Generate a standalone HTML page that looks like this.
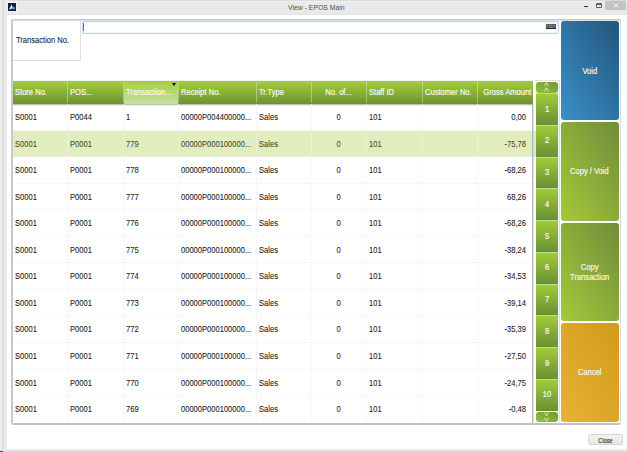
<!DOCTYPE html><html><head><meta charset="utf-8"><style>
*{margin:0;padding:0;box-sizing:border-box}
html,body{width:627px;height:452px;overflow:hidden;background:#fff;font-family:"Liberation Sans",sans-serif}
.a{position:absolute}
svg{display:block}
.t,.h{position:absolute;white-space:nowrap;line-height:10px;height:10px}
.t{color:#1a1a1a;-webkit-text-stroke:0.08px #1a1a1a}
.h{color:#f6faee;-webkit-text-stroke:0.2px #f6faee}
.l{transform-origin:0 0}
.r{transform-origin:100% 0;text-align:right}
.c{transform-origin:50% 0;text-align:center}
</style></head><body>
<div class="a" style="left:0;top:0;width:627px;height:15px;background:linear-gradient(#dcdcdc 0 1px,#efefef 1px 2px,#e9e9e9 2px 14px,#e3e3e3 14px)"></div>
<div class="a" style="left:0;top:0;width:7px;height:452px;background:linear-gradient(90deg,#ececec 0,#ececec 2px,#dcdcdc 2px,#dfdfdf 4px,#e9e9e9 4px)"></div>
<div class="a" style="left:0;top:449px;width:627px;height:3px;background:linear-gradient(#ebebeb 0,#ebebeb 1px,#e4e4e4 1px,#e4e4e4 2px,#d9d9d9 2px)"></div>
<div class="a" style="left:0;top:451px;width:1px;height:1px;background:#e00"></div><div class="a" style="left:1px;top:451px;width:1px;height:1px;background:#0c0"></div><div class="a" style="left:2px;top:451px;width:1px;height:1px;background:#00e"></div>
<div class="t l" style="left:288px;top:2.6px;font-size:7px;transform:scaleX(0.98);color:#4d4d4d;-webkit-text-stroke:0;">View - EPOS Main</div>
<div class="a" style="left:8px;top:3px;width:8px;height:8px;background:#0b1f52;box-shadow:0 0 1px 1px #f4f4f4"><svg width="8" height="8" viewBox="0 0 8 8"><path d="M1 6.4 L3.6 1.6 L4.4 3.6 L3.4 6 Q2.2 6 1 6.4 Z" fill="#eef2f8"/><path d="M3.4 6 L4.4 3.6 L6.7 4.6 L6.7 6.4 Q5 5.6 3.4 6 Z" fill="#9aa8c4"/></svg></div>
<div class="a" style="left:584px;top:6px;width:4px;height:1px;background:#333"></div>
<div class="a" style="left:596px;top:3px;width:6px;height:5px;border:1px solid #606060;border-top-width:2px;border-radius:1px"></div>
<div class="a" style="left:605px;top:1px;width:21px;height:9px;background:#c4c4c4"><svg width="21" height="9" viewBox="0 0 21 9"><path d="M9 2.5 L13 6.5 M13 2.5 L9 6.5" stroke="#fff" stroke-width="1"/></svg></div>
<div class="a" style="left:11px;top:19px;width:610px;height:406px;border:2px solid #c8c8c8;border-top-width:1px;border-left-color:#c9c9c9;border-right-width:1px;border-right-color:#d6d8dc;border-bottom-color:#c2c2c2;border-radius:2px"></div>
<div class="a" style="left:13px;top:20px;width:607px;height:1px;background:#dedede"></div>
<div class="a" style="left:13px;top:21px;width:68px;height:40px;border-right:1px solid #e0e0e0;border-bottom:1px solid #dcdcdc"></div>
<div class="t l" style="left:16px;top:34.9px;font-size:8.6px;transform:scaleX(0.88);">Transaction No.</div>
<div class="a" style="left:82px;top:21px;width:477px;height:13px;border:1px solid #bcd7f2;border-radius:1px;box-shadow:inset 0 0 0 1px #eef5fc"></div>
<div class="a" style="left:83px;top:22.5px;width:1px;height:8.5px;background:#707070"></div>
<div class="a" style="left:546px;top:24px;width:10px;height:5px;background:#5e5e5e;border-bottom:1px solid #2a2a2a;box-shadow:0 0 1px #bbb"><div class="a" style="left:1px;top:1px;width:8px;height:1px;background:repeating-linear-gradient(90deg,#8a8a8a 0 1px,#5e5e5e 1px 2px)"></div><div class="a" style="left:3px;top:3px;width:4px;height:1px;background:#8a8a8a"></div></div>
<div class="a" style="left:13px;top:81px;width:520px;height:23px;background:linear-gradient(#a3cf3a,#6b9133)"></div>
<div class="a" style="left:124px;top:81px;width:54px;height:23px;background:linear-gradient(#a4d03c,#c7dfa8)"></div>
<div class="a" style="left:13px;top:80px;width:520px;height:1px;background:#f1f1f7"></div>
<div class="a" style="left:13px;top:81px;width:520px;height:1px;background:#aabb72"></div>
<div class="a" style="left:13px;top:104px;width:520px;height:1px;background:#b7c4a4"></div>
<div class="a" style="left:13px;top:105px;width:520px;height:1px;background:#eef1ea"></div>
<div class="a" style="left:67px;top:82px;width:1px;height:21px;background:rgba(255,255,255,0.35)"></div>
<div class="a" style="left:123px;top:82px;width:1px;height:21px;background:rgba(255,255,255,0.35)"></div>
<div class="a" style="left:178px;top:82px;width:1px;height:21px;background:rgba(255,255,255,0.35)"></div>
<div class="a" style="left:256px;top:82px;width:1px;height:21px;background:rgba(255,255,255,0.35)"></div>
<div class="a" style="left:311px;top:82px;width:1px;height:21px;background:rgba(255,255,255,0.35)"></div>
<div class="a" style="left:366px;top:82px;width:1px;height:21px;background:rgba(255,255,255,0.35)"></div>
<div class="a" style="left:422px;top:82px;width:1px;height:21px;background:rgba(255,255,255,0.35)"></div>
<div class="a" style="left:477px;top:82px;width:1px;height:21px;background:rgba(255,255,255,0.35)"></div>
<div class="h l" style="left:15px;top:87.2px;font-size:8.6px;transform:scaleX(0.88);">Store No.</div>
<div class="h l" style="left:70px;top:87.2px;font-size:8.6px;transform:scaleX(0.88);">POS...</div>
<div class="h l" style="left:126px;top:87.2px;font-size:8.6px;transform:scaleX(0.88);">Transaction...</div>
<div class="h l" style="left:181px;top:87.2px;font-size:8.6px;transform:scaleX(0.88);">Receipt No.</div>
<div class="h l" style="left:259px;top:87.2px;font-size:8.6px;transform:scaleX(0.88);">Tr.Type</div>
<div class="h c" style="left:311px;top:87.2px;font-size:8.6px;transform:scaleX(0.88);width:55px;">No. of...</div>
<div class="h l" style="left:369px;top:87.2px;font-size:8.6px;transform:scaleX(0.88);">Staff ID</div>
<div class="h l" style="left:425px;top:87.2px;font-size:8.6px;transform:scaleX(0.88);">Customer No.</div>
<div class="h r" style="left:477px;top:87.2px;font-size:8.6px;transform:scaleX(0.88);width:53px;">Gross Amount</div>
<div class="a" style="left:172px;top:83px;width:0;height:0;border-left:2px solid transparent;border-right:2px solid transparent;border-top:3px solid #111"></div>
<div class="a" style="left:67px;top:104px;width:1px;height:319px;border-left:1px dotted #f2f2f2"></div>
<div class="a" style="left:123px;top:104px;width:1px;height:319px;border-left:1px dotted #f2f2f2"></div>
<div class="a" style="left:178px;top:104px;width:1px;height:319px;border-left:1px dotted #f2f2f2"></div>
<div class="a" style="left:256px;top:104px;width:1px;height:319px;border-left:1px dotted #f2f2f2"></div>
<div class="a" style="left:311px;top:104px;width:1px;height:319px;border-left:1px dotted #f2f2f2"></div>
<div class="a" style="left:366px;top:104px;width:1px;height:319px;border-left:1px dotted #f2f2f2"></div>
<div class="a" style="left:422px;top:104px;width:1px;height:319px;border-left:1px dotted #f2f2f2"></div>
<div class="a" style="left:477px;top:104px;width:1px;height:319px;border-left:1px dotted #f2f2f2"></div>
<div class="a" style="left:13px;top:129.55px;width:520px;height:1px;border-top:1px dotted #ededed"></div>
<div class="t l" style="left:15px;top:112.0px;font-size:8.6px;transform:scaleX(0.88);">S0001</div>
<div class="t l" style="left:70px;top:112.0px;font-size:8.6px;transform:scaleX(0.88);">P0044</div>
<div class="t l" style="left:126px;top:112.0px;font-size:8.6px;transform:scaleX(0.88);">1</div>
<div class="t l" style="left:181px;top:112.0px;font-size:8.6px;transform:scaleX(0.88);">00000P004400000...</div>
<div class="t l" style="left:259px;top:112.0px;font-size:8.6px;transform:scaleX(0.88);">Sales</div>
<div class="t c" style="left:311px;top:112.0px;font-size:8.6px;transform:scaleX(0.88);width:55px;">0</div>
<div class="t l" style="left:369px;top:112.0px;font-size:8.6px;transform:scaleX(0.88);">101</div>
<div class="t r" style="left:477px;top:112.0px;font-size:8.6px;transform:scaleX(0.88);width:49px;">0,00</div>
<div class="a" style="left:13px;top:130.55px;width:523px;height:26.55px;background:#e1edbf"></div>
<div class="a" style="left:67px;top:130.55px;width:1px;height:26.55px;background:rgba(255,255,255,0.3)"></div>
<div class="a" style="left:123px;top:130.55px;width:1px;height:26.55px;background:rgba(255,255,255,0.3)"></div>
<div class="a" style="left:178px;top:130.55px;width:1px;height:26.55px;background:rgba(255,255,255,0.3)"></div>
<div class="a" style="left:256px;top:130.55px;width:1px;height:26.55px;background:rgba(255,255,255,0.3)"></div>
<div class="a" style="left:311px;top:130.55px;width:1px;height:26.55px;background:rgba(255,255,255,0.3)"></div>
<div class="a" style="left:366px;top:130.55px;width:1px;height:26.55px;background:rgba(255,255,255,0.3)"></div>
<div class="a" style="left:422px;top:130.55px;width:1px;height:26.55px;background:rgba(255,255,255,0.3)"></div>
<div class="a" style="left:477px;top:130.55px;width:1px;height:26.55px;background:rgba(255,255,255,0.3)"></div>
<div class="a" style="left:13px;top:156.10px;width:520px;height:1px;border-top:1px dotted #ededed"></div>
<div class="t l" style="left:15px;top:138.55px;font-size:8.6px;transform:scaleX(0.88);color:#3f4f2a;-webkit-text-stroke:0.08px #3f4f2a;">S0001</div>
<div class="t l" style="left:70px;top:138.55px;font-size:8.6px;transform:scaleX(0.88);color:#3f4f2a;-webkit-text-stroke:0.08px #3f4f2a;">P0001</div>
<div class="t l" style="left:126px;top:138.55px;font-size:8.6px;transform:scaleX(0.88);color:#3f4f2a;-webkit-text-stroke:0.08px #3f4f2a;">779</div>
<div class="t l" style="left:181px;top:138.55px;font-size:8.6px;transform:scaleX(0.88);color:#3f4f2a;-webkit-text-stroke:0.08px #3f4f2a;">00000P000100000...</div>
<div class="t l" style="left:259px;top:138.55px;font-size:8.6px;transform:scaleX(0.88);color:#3f4f2a;-webkit-text-stroke:0.08px #3f4f2a;">Sales</div>
<div class="t c" style="left:311px;top:138.55px;font-size:8.6px;transform:scaleX(0.88);width:55px;color:#3f4f2a;-webkit-text-stroke:0.08px #3f4f2a;">0</div>
<div class="t l" style="left:369px;top:138.55px;font-size:8.6px;transform:scaleX(0.88);color:#3f4f2a;-webkit-text-stroke:0.08px #3f4f2a;">101</div>
<div class="t r" style="left:477px;top:138.55px;font-size:8.6px;transform:scaleX(0.88);width:49px;color:#3f4f2a;-webkit-text-stroke:0.08px #3f4f2a;">-75,78</div>
<div class="a" style="left:13px;top:182.65px;width:520px;height:1px;border-top:1px dotted #ededed"></div>
<div class="t l" style="left:15px;top:165.1px;font-size:8.6px;transform:scaleX(0.88);">S0001</div>
<div class="t l" style="left:70px;top:165.1px;font-size:8.6px;transform:scaleX(0.88);">P0001</div>
<div class="t l" style="left:126px;top:165.1px;font-size:8.6px;transform:scaleX(0.88);">778</div>
<div class="t l" style="left:181px;top:165.1px;font-size:8.6px;transform:scaleX(0.88);">00000P000100000...</div>
<div class="t l" style="left:259px;top:165.1px;font-size:8.6px;transform:scaleX(0.88);">Sales</div>
<div class="t c" style="left:311px;top:165.1px;font-size:8.6px;transform:scaleX(0.88);width:55px;">0</div>
<div class="t l" style="left:369px;top:165.1px;font-size:8.6px;transform:scaleX(0.88);">101</div>
<div class="t r" style="left:477px;top:165.1px;font-size:8.6px;transform:scaleX(0.88);width:49px;">-68,26</div>
<div class="a" style="left:13px;top:209.20px;width:520px;height:1px;border-top:1px dotted #ededed"></div>
<div class="t l" style="left:15px;top:191.65px;font-size:8.6px;transform:scaleX(0.88);">S0001</div>
<div class="t l" style="left:70px;top:191.65px;font-size:8.6px;transform:scaleX(0.88);">P0001</div>
<div class="t l" style="left:126px;top:191.65px;font-size:8.6px;transform:scaleX(0.88);">777</div>
<div class="t l" style="left:181px;top:191.65px;font-size:8.6px;transform:scaleX(0.88);">00000P000100000...</div>
<div class="t l" style="left:259px;top:191.65px;font-size:8.6px;transform:scaleX(0.88);">Sales</div>
<div class="t c" style="left:311px;top:191.65px;font-size:8.6px;transform:scaleX(0.88);width:55px;">0</div>
<div class="t l" style="left:369px;top:191.65px;font-size:8.6px;transform:scaleX(0.88);">101</div>
<div class="t r" style="left:477px;top:191.65px;font-size:8.6px;transform:scaleX(0.88);width:49px;">68,26</div>
<div class="a" style="left:13px;top:235.75px;width:520px;height:1px;border-top:1px dotted #ededed"></div>
<div class="t l" style="left:15px;top:218.2px;font-size:8.6px;transform:scaleX(0.88);">S0001</div>
<div class="t l" style="left:70px;top:218.2px;font-size:8.6px;transform:scaleX(0.88);">P0001</div>
<div class="t l" style="left:126px;top:218.2px;font-size:8.6px;transform:scaleX(0.88);">776</div>
<div class="t l" style="left:181px;top:218.2px;font-size:8.6px;transform:scaleX(0.88);">00000P000100000...</div>
<div class="t l" style="left:259px;top:218.2px;font-size:8.6px;transform:scaleX(0.88);">Sales</div>
<div class="t c" style="left:311px;top:218.2px;font-size:8.6px;transform:scaleX(0.88);width:55px;">0</div>
<div class="t l" style="left:369px;top:218.2px;font-size:8.6px;transform:scaleX(0.88);">101</div>
<div class="t r" style="left:477px;top:218.2px;font-size:8.6px;transform:scaleX(0.88);width:49px;">-68,26</div>
<div class="a" style="left:13px;top:262.30px;width:520px;height:1px;border-top:1px dotted #ededed"></div>
<div class="t l" style="left:15px;top:244.75px;font-size:8.6px;transform:scaleX(0.88);">S0001</div>
<div class="t l" style="left:70px;top:244.75px;font-size:8.6px;transform:scaleX(0.88);">P0001</div>
<div class="t l" style="left:126px;top:244.75px;font-size:8.6px;transform:scaleX(0.88);">775</div>
<div class="t l" style="left:181px;top:244.75px;font-size:8.6px;transform:scaleX(0.88);">00000P000100000...</div>
<div class="t l" style="left:259px;top:244.75px;font-size:8.6px;transform:scaleX(0.88);">Sales</div>
<div class="t c" style="left:311px;top:244.75px;font-size:8.6px;transform:scaleX(0.88);width:55px;">0</div>
<div class="t l" style="left:369px;top:244.75px;font-size:8.6px;transform:scaleX(0.88);">101</div>
<div class="t r" style="left:477px;top:244.75px;font-size:8.6px;transform:scaleX(0.88);width:49px;">-38,24</div>
<div class="a" style="left:13px;top:288.85px;width:520px;height:1px;border-top:1px dotted #ededed"></div>
<div class="t l" style="left:15px;top:271.3px;font-size:8.6px;transform:scaleX(0.88);">S0001</div>
<div class="t l" style="left:70px;top:271.3px;font-size:8.6px;transform:scaleX(0.88);">P0001</div>
<div class="t l" style="left:126px;top:271.3px;font-size:8.6px;transform:scaleX(0.88);">774</div>
<div class="t l" style="left:181px;top:271.3px;font-size:8.6px;transform:scaleX(0.88);">00000P000100000...</div>
<div class="t l" style="left:259px;top:271.3px;font-size:8.6px;transform:scaleX(0.88);">Sales</div>
<div class="t c" style="left:311px;top:271.3px;font-size:8.6px;transform:scaleX(0.88);width:55px;">0</div>
<div class="t l" style="left:369px;top:271.3px;font-size:8.6px;transform:scaleX(0.88);">101</div>
<div class="t r" style="left:477px;top:271.3px;font-size:8.6px;transform:scaleX(0.88);width:49px;">-34,53</div>
<div class="a" style="left:13px;top:315.40px;width:520px;height:1px;border-top:1px dotted #ededed"></div>
<div class="t l" style="left:15px;top:297.85px;font-size:8.6px;transform:scaleX(0.88);">S0001</div>
<div class="t l" style="left:70px;top:297.85px;font-size:8.6px;transform:scaleX(0.88);">P0001</div>
<div class="t l" style="left:126px;top:297.85px;font-size:8.6px;transform:scaleX(0.88);">773</div>
<div class="t l" style="left:181px;top:297.85px;font-size:8.6px;transform:scaleX(0.88);">00000P000100000...</div>
<div class="t l" style="left:259px;top:297.85px;font-size:8.6px;transform:scaleX(0.88);">Sales</div>
<div class="t c" style="left:311px;top:297.85px;font-size:8.6px;transform:scaleX(0.88);width:55px;">0</div>
<div class="t l" style="left:369px;top:297.85px;font-size:8.6px;transform:scaleX(0.88);">101</div>
<div class="t r" style="left:477px;top:297.85px;font-size:8.6px;transform:scaleX(0.88);width:49px;">-39,14</div>
<div class="a" style="left:13px;top:341.95px;width:520px;height:1px;border-top:1px dotted #ededed"></div>
<div class="t l" style="left:15px;top:324.4px;font-size:8.6px;transform:scaleX(0.88);">S0001</div>
<div class="t l" style="left:70px;top:324.4px;font-size:8.6px;transform:scaleX(0.88);">P0001</div>
<div class="t l" style="left:126px;top:324.4px;font-size:8.6px;transform:scaleX(0.88);">772</div>
<div class="t l" style="left:181px;top:324.4px;font-size:8.6px;transform:scaleX(0.88);">00000P000100000...</div>
<div class="t l" style="left:259px;top:324.4px;font-size:8.6px;transform:scaleX(0.88);">Sales</div>
<div class="t c" style="left:311px;top:324.4px;font-size:8.6px;transform:scaleX(0.88);width:55px;">0</div>
<div class="t l" style="left:369px;top:324.4px;font-size:8.6px;transform:scaleX(0.88);">101</div>
<div class="t r" style="left:477px;top:324.4px;font-size:8.6px;transform:scaleX(0.88);width:49px;">-35,39</div>
<div class="a" style="left:13px;top:368.50px;width:520px;height:1px;border-top:1px dotted #ededed"></div>
<div class="t l" style="left:15px;top:350.95px;font-size:8.6px;transform:scaleX(0.88);">S0001</div>
<div class="t l" style="left:70px;top:350.95px;font-size:8.6px;transform:scaleX(0.88);">P0001</div>
<div class="t l" style="left:126px;top:350.95px;font-size:8.6px;transform:scaleX(0.88);">771</div>
<div class="t l" style="left:181px;top:350.95px;font-size:8.6px;transform:scaleX(0.88);">00000P000100000...</div>
<div class="t l" style="left:259px;top:350.95px;font-size:8.6px;transform:scaleX(0.88);">Sales</div>
<div class="t c" style="left:311px;top:350.95px;font-size:8.6px;transform:scaleX(0.88);width:55px;">0</div>
<div class="t l" style="left:369px;top:350.95px;font-size:8.6px;transform:scaleX(0.88);">101</div>
<div class="t r" style="left:477px;top:350.95px;font-size:8.6px;transform:scaleX(0.88);width:49px;">-27,50</div>
<div class="a" style="left:13px;top:395.05px;width:520px;height:1px;border-top:1px dotted #ededed"></div>
<div class="t l" style="left:15px;top:377.5px;font-size:8.6px;transform:scaleX(0.88);">S0001</div>
<div class="t l" style="left:70px;top:377.5px;font-size:8.6px;transform:scaleX(0.88);">P0001</div>
<div class="t l" style="left:126px;top:377.5px;font-size:8.6px;transform:scaleX(0.88);">770</div>
<div class="t l" style="left:181px;top:377.5px;font-size:8.6px;transform:scaleX(0.88);">00000P000100000...</div>
<div class="t l" style="left:259px;top:377.5px;font-size:8.6px;transform:scaleX(0.88);">Sales</div>
<div class="t c" style="left:311px;top:377.5px;font-size:8.6px;transform:scaleX(0.88);width:55px;">0</div>
<div class="t l" style="left:369px;top:377.5px;font-size:8.6px;transform:scaleX(0.88);">101</div>
<div class="t r" style="left:477px;top:377.5px;font-size:8.6px;transform:scaleX(0.88);width:49px;">-24,75</div>
<div class="t l" style="left:15px;top:404.05px;font-size:8.6px;transform:scaleX(0.88);">S0001</div>
<div class="t l" style="left:70px;top:404.05px;font-size:8.6px;transform:scaleX(0.88);">P0001</div>
<div class="t l" style="left:126px;top:404.05px;font-size:8.6px;transform:scaleX(0.88);">769</div>
<div class="t l" style="left:181px;top:404.05px;font-size:8.6px;transform:scaleX(0.88);">00000P000100000...</div>
<div class="t l" style="left:259px;top:404.05px;font-size:8.6px;transform:scaleX(0.88);">Sales</div>
<div class="t c" style="left:311px;top:404.05px;font-size:8.6px;transform:scaleX(0.88);width:55px;">0</div>
<div class="t l" style="left:369px;top:404.05px;font-size:8.6px;transform:scaleX(0.88);">101</div>
<div class="t r" style="left:477px;top:404.05px;font-size:8.6px;transform:scaleX(0.88);width:49px;">-0,48</div>
<div class="a" style="left:532px;top:104px;width:1px;height:319px;background:repeating-linear-gradient(#a4b4bc 0 2px,#b8c6cc 2px 3px)"></div><div class="a" style="left:533px;top:104px;width:1px;height:319px;background:rgba(170,185,200,0.4)"></div>
<div class="a" style="left:535px;top:80px;width:25px;height:344px;border-top:1px solid #e2e2e2;border-right:1px solid #dedede"></div>
<div class="a" style="left:536px;top:82px;width:22px;height:10.5px;border-radius:3px;background:linear-gradient(to top right,#94c33a,#72963a)"></div>
<div class="a" style="left:536px;top:411.5px;width:22px;height:10.5px;border-radius:3px;background:linear-gradient(to top right,#94c33a,#72963a)"></div>
<svg class="a" style="left:536px;top:81px" width="22" height="12"><path d="M8.6 4.9 L10.5 1.4 L12.4 4.9 M8.6 10.3 L10.5 6.8 L12.4 10.3" fill="none" stroke="#e6efd4" stroke-width="0.9"/></svg>
<svg class="a" style="left:536px;top:411px" width="22" height="12"><path d="M8.6 1.4 L10.5 4.9 L12.4 1.4 M8.6 6.8 L10.5 10.3 L12.4 6.8" fill="none" stroke="#e6efd4" stroke-width="0.9"/></svg>
<div class="a" style="left:536px;top:93.00px;width:22px;height:31.75px;background:linear-gradient(#9fcb3a,#6a8f33);border-top:1px solid #c2dc8e"></div>
<div class="h c" style="left:536px;top:103.5px;font-size:8.6px;transform:scaleX(0.88);width:22px;">1</div>
<div class="a" style="left:536px;top:124.75px;width:22px;height:31.75px;background:linear-gradient(#9fcb3a,#6a8f33);border-top:1px solid #c2dc8e"></div>
<div class="h c" style="left:536px;top:135.25px;font-size:8.6px;transform:scaleX(0.88);width:22px;">2</div>
<div class="a" style="left:536px;top:156.50px;width:22px;height:31.75px;background:linear-gradient(#9fcb3a,#6a8f33);border-top:1px solid #c2dc8e"></div>
<div class="h c" style="left:536px;top:167.0px;font-size:8.6px;transform:scaleX(0.88);width:22px;">3</div>
<div class="a" style="left:536px;top:188.25px;width:22px;height:31.75px;background:linear-gradient(#9fcb3a,#6a8f33);border-top:1px solid #c2dc8e"></div>
<div class="h c" style="left:536px;top:198.75px;font-size:8.6px;transform:scaleX(0.88);width:22px;">4</div>
<div class="a" style="left:536px;top:220.00px;width:22px;height:31.75px;background:linear-gradient(#9fcb3a,#6a8f33);border-top:1px solid #c2dc8e"></div>
<div class="h c" style="left:536px;top:230.5px;font-size:8.6px;transform:scaleX(0.88);width:22px;">5</div>
<div class="a" style="left:536px;top:251.75px;width:22px;height:31.75px;background:linear-gradient(#9fcb3a,#6a8f33);border-top:1px solid #c2dc8e"></div>
<div class="h c" style="left:536px;top:262.25px;font-size:8.6px;transform:scaleX(0.88);width:22px;">6</div>
<div class="a" style="left:536px;top:283.50px;width:22px;height:31.75px;background:linear-gradient(#9fcb3a,#6a8f33);border-top:1px solid #c2dc8e"></div>
<div class="h c" style="left:536px;top:294.0px;font-size:8.6px;transform:scaleX(0.88);width:22px;">7</div>
<div class="a" style="left:536px;top:315.25px;width:22px;height:31.75px;background:linear-gradient(#9fcb3a,#6a8f33);border-top:1px solid #c2dc8e"></div>
<div class="h c" style="left:536px;top:325.75px;font-size:8.6px;transform:scaleX(0.88);width:22px;">8</div>
<div class="a" style="left:536px;top:347.00px;width:22px;height:31.75px;background:linear-gradient(#9fcb3a,#6a8f33);border-top:1px solid #c2dc8e"></div>
<div class="h c" style="left:536px;top:357.5px;font-size:8.6px;transform:scaleX(0.88);width:22px;">9</div>
<div class="a" style="left:536px;top:378.75px;width:22px;height:31.75px;background:linear-gradient(#9fcb3a,#6a8f33);border-top:1px solid #c2dc8e"></div>
<div class="h c" style="left:536px;top:389.25px;font-size:8.6px;transform:scaleX(0.88);width:22px;">10</div>
<div class="a" style="left:561px;top:21px;width:58px;height:99px;border-radius:3px;background:linear-gradient(to top right,#3b90c8,#22567c);display:flex;align-items:center;justify-content:center;text-align:center"><div style="font-size:8.6px;line-height:10px;transform:translate(-0.6px,-0.1px) scaleX(0.88);color:#f2f6ea;-webkit-text-stroke:0.2px #f2f6ea;white-space:nowrap">Void</div></div>
<div class="a" style="left:561px;top:122px;width:58px;height:98.5px;border-radius:3px;background:linear-gradient(to top right,#a4ca3a,#718c3b);display:flex;align-items:center;justify-content:center;text-align:center"><div style="font-size:8.6px;line-height:10px;transform:translate(-0.6px,-0.1px) scaleX(0.88);color:#f2f6ea;-webkit-text-stroke:0.2px #f2f6ea;white-space:nowrap">Copy / Void</div></div>
<div class="a" style="left:561px;top:223px;width:58px;height:98px;border-radius:3px;background:linear-gradient(to top right,#a4ca3a,#718c3b);display:flex;align-items:center;justify-content:center;text-align:center"><div style="font-size:8.6px;line-height:10px;transform:translate(-0.6px,-0.1px) scaleX(0.88);color:#f2f6ea;-webkit-text-stroke:0.2px #f2f6ea;white-space:nowrap">Copy<br>Transaction</div></div>
<div class="a" style="left:561px;top:323px;width:58px;height:98.5px;border-radius:3px;background:linear-gradient(to top right,#e6b335,#d29a1b);display:flex;align-items:center;justify-content:center;text-align:center"><div style="font-size:8.6px;line-height:10px;transform:translate(-0.6px,-0.1px) scaleX(0.88);color:#f2f6ea;-webkit-text-stroke:0.2px #f2f6ea;white-space:nowrap">Cancel</div></div>
<div class="a" style="left:588px;top:434px;width:35px;height:11px;border:1px solid #d6d6d6;border-radius:1.5px;background:linear-gradient(#f3f3f3,#e6e6e6)"></div>
<div class="t c" style="left:588px;top:435.5px;font-size:6.8px;transform:scaleX(0.82);width:35px;-webkit-text-stroke:0.1px #222;color:#222;">Close</div>
</body></html>
